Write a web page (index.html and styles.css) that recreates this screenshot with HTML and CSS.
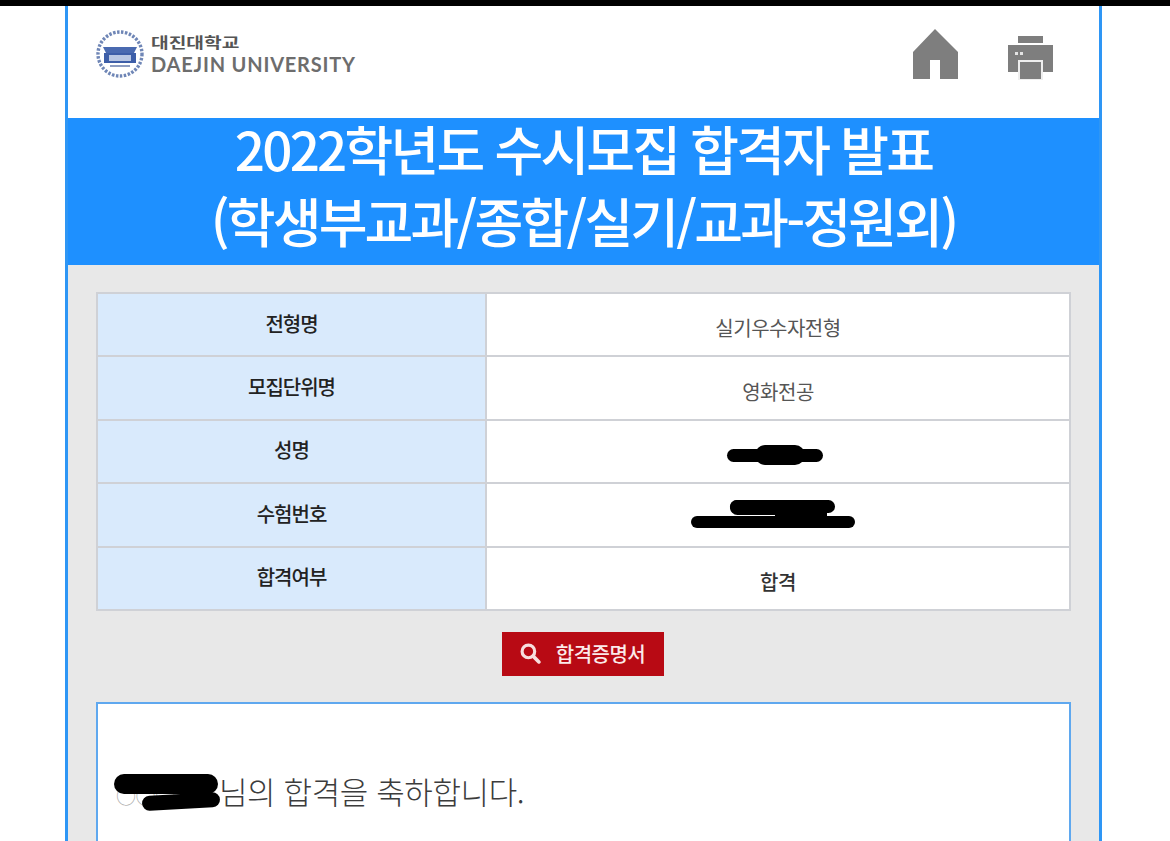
FILE: index.html
```html
<!DOCTYPE html>
<html lang="ko">
<head>
  <meta charset="UTF-8" />
  <meta name="viewport" content="width=device-width, initial-scale=1.0" />
  <title>2022학년도 수시모집 합격자 발표</title>
  <link rel="stylesheet" href="styles.css">
</head>
<body>
  <div class="topbar"></div>
  <div class="wrap">
    <header class="head">
      <a class="logo" href="#">
        <svg class="seal" width="48" height="50" viewBox="0 0 48 50">
          <circle cx="24" cy="25" r="22" fill="none" stroke="#6f86b6" stroke-width="3.4" stroke-dasharray="2.5 1.5" />
          <path d="M10 24 L38 24 L41 18 L7 18 Z" fill="#4a6ab0" />
          <rect x="8" y="24" width="32" height="10" fill="#3d5ea8" />
          <rect x="13" y="26" width="22" height="6" fill="#b9c7e3" />
          <rect x="14" y="36" width="20" height="2" fill="#8d9dc2" />
        </svg>
        <span class="logo-text">
          <span class="logo-kr">대진대학교</span>
          <span class="logo-en">DAEJIN UNIVERSITY</span>
        </span>
      </a>
      <nav class="tools">
        <a href="#" aria-label="홈">
          <svg width="45" height="51" viewBox="0 0 45 51">
            <path d="M22 0 L45 23 L45 50 L27 50 L27 31 L17 31 L17 50 L0 50 L0 23 Z" fill="#7e7e7e" />
          </svg>
        </a>
        <a href="#" aria-label="인쇄">
          <svg width="46" height="44" viewBox="0 0 46 44">
            <rect x="10" y="0" width="25" height="7" fill="#7e7e7e" />
            <rect x="0" y="9" width="45" height="27" fill="#7e7e7e" />
            <rect x="11" y="25" width="23" height="19" fill="#7e7e7e" stroke="#eee" stroke-width="2" />
            <rect x="7" y="16" width="3" height="3" fill="#e4e4e4" />
            <rect x="12" y="16" width="3" height="3" fill="#e4e4e4" />
          </svg>
        </a>
      </nav>
    </header>

    <h1 class="title"><span class="title-in">2022학년도 수시모집 합격자 발표<br>(학생부교과/종합/실기/교과-정원외)</span></h1>

    <main class="content">
      <table class="result">
        <tr>
          <th>전형명</th>
          <td>실기우수자전형</td>
        </tr>
        <tr>
          <th>모집단위명</th>
          <td>영화전공</td>
        </tr>
        <tr>
          <th>성명</th>
          <td>
            <span class="hidden-cell">○○○
              <i class="ink ink-a"></i>
              <i class="ink ink-b"></i>
            </span>
          </td>
        </tr>
        <tr>
          <th>수험번호</th>
          <td>
            <span class="hidden-cell">00000000
              <i class="ink ink-c"></i>
              <i class="ink ink-d"></i>
              <i class="ink ink-h"></i>
              <i class="ink ink-e"></i>
            </span>
          </td>
        </tr>
        <tr>
          <th>합격여부</th>
          <td class="pass">합격</td>
        </tr>
      </table>

      <div class="btn-row">
        <a class="btn-cert" href="#">
          <svg width="21" height="21" viewBox="0 0 20 20">
            <circle cx="8" cy="8" r="6" fill="none" stroke="#f7dede" stroke-width="3" />
            <path d="M12.5 12.5 L18 18" stroke="#f7dede" stroke-width="3.4" stroke-linecap="round" />
          </svg>
          합격증명서
        </a>
      </div>

      <section class="notice">
        <p class="congrats">
          <span class="hidden-name">○○○
            <i class="ink ink-f"></i>
            <i class="ink ink-g"></i>
          </span>님의 합격을 축하합니다.
        </p>
      </section>
    </main>
  </div>
</body>
</html>
```

FILE: styles.css
```css
* {
  box-sizing: border-box;
}
body {
  margin: 0;
  height: 841px;
  overflow: hidden;
  background: #fff;
  font-family: "Noto Sans CJK KR", "Noto Sans", sans-serif;
  color: #444;
}
.topbar {
  height: 6px;
  background: #000;
}
.wrap {
  width: 1037px;
  margin-left: 65px;
  border-left: 3px solid #2e96f5;
  border-right: 3px solid #2e96f5;
  height: 835px;
  overflow: hidden;
  background: #e8e8e8;
}
.head {
  height: 112px;
  background: #fff;
  display: flex;
  justify-content: space-between;
  align-items: flex-start;
  padding: 23px 45px 0 28px;
}
.logo {
  display: flex;
  align-items: center;
  gap: 7px;
  text-decoration: none;
}
.logo-text {
  display: flex;
  flex-direction: column;
  gap: 3px;
}
.logo-kr {
  font-size: 15px;
  line-height: 17px;
  font-weight: 700;
  color: #555;
  transform: scaleX(1.28);
  transform-origin: left center;
}
.logo-en {
  font-family: Lato, sans-serif;
  font-size: 20px;
  line-height: 22px;
  font-weight: 700;
  letter-spacing: 0.8px;
  color: #6d6d6d;
}
.tools {
  display: flex;
  align-items: flex-end;
  gap: 50px;
}
.tools a {
  display: block;
  line-height: 0;
}
.title {
  display: flow-root;
  margin: 0;
  height: 147px;
  background: #1e90ff;
  color: #fff;
  font-size: 53px;
  font-weight: 500;
  line-height: 72px;
  letter-spacing: -2.8px;
  text-align: center;
}
.title-in {
  display: block;
  margin-top: -6px;
}
.content {
  padding: 27px 28px 0;
}
.result {
  width: 975px;
  border-collapse: collapse;
  table-layout: fixed;
  border: 2px solid #cfd1d6;
  background: #fff;
}
.result th, .result td {
  height: 63.4px;
  border: 2px solid #cfd1d6;
  text-align: center;
  padding: 0;
}
.result th {
  width: 389px;
  background: #d9eafc;
  color: #222;
  font-size: 20px;
  font-weight: 500;
  letter-spacing: -1px;
  padding-bottom: 3px;
}
.result td {
  color: #555;
  font-size: 20px;
  letter-spacing: -0.5px;
  padding-top: 6px;
}
.result td.pass {
  color: #333;
  font-weight: 500;
}
.hidden-cell, .hidden-name {
  position: relative;
  display: inline-block;
}
.hidden-cell {
  width: 60px;
  height: 20px;
  font-size: 12px;
  line-height: 20px;
  color: #999;
  vertical-align: middle;
  white-space: nowrap;
}
.ink {
  position: absolute;
  background: #000;
  border-radius: 12px;
}
.ink-a { left: -21px; top: 1px; width: 96px; height: 13px; }
.ink-b { left: 7px; top: -3px; width: 50px; height: 20px; }
.ink-c { left: -18px; top: -11px; width: 105px; height: 13px; }
.ink-d { left: -18px; top: -11px; width: 76px; height: 15px; }
.ink-h { left: 27px; top: -5px; width: 52px; height: 14px; border-radius: 2px; }
.ink-e { left: -57px; top: 5px; width: 164px; height: 12px; }
.ink-f { left: -2px; top: -10px; width: 104px; height: 20px; }
.ink-g { left: 26px; top: 10px; width: 78px; height: 15px; transform: rotate(-3deg); }
.btn-row {
  display: flex;
  justify-content: center;
  margin: 21px 2px 0 0;
}
.btn-cert {
  width: 162px;
  height: 44px;
  background: #b80a14;
  color: #fbeaea;
  display: flex;
  align-items: center;
  justify-content: center;
  gap: 15px;
  font-size: 20px;
  font-weight: 500;
  letter-spacing: -0.5px;
  text-decoration: none;
}
.notice {
  margin-top: 26px;
  width: 975px;
  height: 200px;
  background: #fff;
  border: 2px solid #5fa8ef;
  padding: 58px 18px 0;
}
.congrats {
  margin: 0;
  font-size: 31px;
  line-height: 58px;
  font-weight: 300;
  color: #3c3c3c;
  letter-spacing: -0.4px;
}
.hidden-name {
  width: 103px;
  height: 24px;
  font-size: 20px;
  line-height: 24px;
  color: #aaa;
}
```
